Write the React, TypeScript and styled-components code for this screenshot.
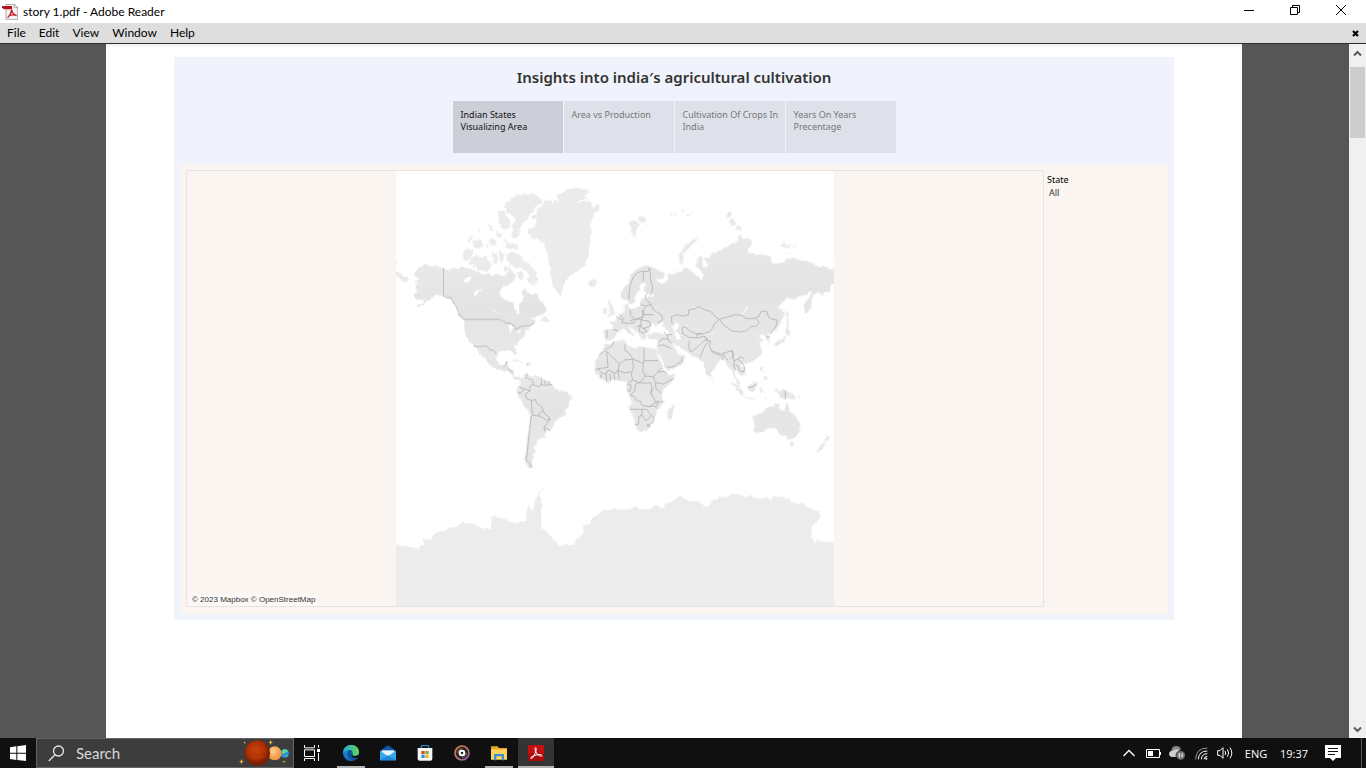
import React from "react";
import styled, { createGlobalStyle, css } from "styled-components";

const UI_FONT = 'Lato, "Open Sans", sans-serif';
const TRAY_FONT = '"Open Sans", "Noto Sans", sans-serif';
const REPORT_FONT = '"Noto Sans", "Open Sans", sans-serif';

const GlobalStyle = createGlobalStyle`
  *, *::before, *::after { box-sizing: border-box; }
  html, body { margin: 0; height: 100%; overflow: hidden; }
  #root { height: 100%; }
  button, input { font: inherit; color: inherit; }
  svg { display: block; }
`;

const Desktop = styled.div`
  display: flex;
  flex-direction: column;
  height: 100vh;
  background: #565656;
  font-family: ${UI_FONT};
  font-size: 12px;
  color: #000;
`;

const PlainButton = styled.button`
  display: flex;
  align-items: center;
  justify-content: center;
  padding: 0;
  border: 0;
  background: none;
`;

/* ---------- Reader window ---------- */

const TitleBar = styled.header`
  display: flex;
  align-items: center;
  height: 23px;
  padding: 0 2px;
  background: #fff;
`;

const WindowTitle = styled.h1`
  flex: 1;
  margin: 0 0 0 5px;
  font-size: 12px;
  font-weight: 400;
  line-height: 23px;
`;

const CaptionButton = styled(PlainButton)`
  align-self: flex-start;
  width: 46px;
  height: 20px;
`;

const MenuBar = styled.nav`
  display: flex;
  align-items: center;
  gap: 13px;
  height: 21px;
  padding: 0 6px 0 7px;
  border-bottom: 1px solid #2c2c2c;
  background: #dedede;
`;

const MenuItem = styled(PlainButton)`
  line-height: 20px;
`;

const CloseDocument = styled(PlainButton)`
  width: 9px;
  height: 20px;
  margin-left: auto;
`;

const Viewer = styled.div`
  display: flex;
  flex: 1;
  min-height: 0;
`;

const Paper = styled.main`
  flex: 1;
  min-width: 0;
  margin: 0 107px 0 106px;
  padding: 13px 68px 0;
  background: linear-gradient(#ededed, #fff 4px);
`;

const ScrollRail = styled.div`
  display: flex;
  flex-direction: column;
  width: 17px;
  padding: 0 1px 0 1px;
  background: #f0f0f0;
`;

const ScrollButton = styled(PlainButton)`
  height: 18px;
`;

const ScrollTrack = styled.div`
  flex: 1;
  padding-top: 5px;
`;

const ScrollThumb = styled.div`
  height: 71px;
  background: #cdcdcd;
`;

/* ---------- Report ---------- */

const Story = styled.article`
  display: flex;
  flex-direction: column;
  align-items: center;
  padding: 8px 6px 6px;
  background: #f0f3fb;
  font-family: ${REPORT_FONT};
`;

const StoryTitle = styled.h2`
  margin: 0;
  color: #333;
  font-size: 15px;
  font-weight: 600;
  line-height: 24px;
`;

const StoryPoints = styled.nav`
  display: grid;
  grid-template-columns: repeat(4, 110px);
  gap: 1px;
  margin: 12px 0 11px;
`;

const StoryPoint = styled.button<{ $current?: boolean }>`
  display: flex;
  align-items: flex-start;
  height: 52px;
  padding: 8px 0 0 8px;
  border: 0;
  background: ${(p) => (p.$current ? "#cccfd7" : "#dee1e9")};
  color: ${(p) => (p.$current ? "#111" : "#777")};
  font-size: 9px;
  line-height: 12px;
  text-align: left;
`;

const Dashboard = styled.section`
  display: flex;
  gap: 3px;
  align-self: stretch;
  padding: 6px 6px 7px;
  background: #faf5f1;
`;

const MapFrame = styled.figure`
  position: relative;
  flex: 1;
  margin: 0;
  border: 1px solid #e6e3e0;
`;

const WorldMapSvg = styled.svg`
  width: 438px;
  height: 435px;
  margin: 0 auto;
  background: #fff;
`;

const Attribution = styled.figcaption`
  position: absolute;
  left: 2px;
  bottom: 0;
  padding: 0 3px;
  background: #fbf9f8;
  color: #333;
  font-family: "Liberation Sans", Arial, sans-serif;
  font-size: 8px;
  line-height: 12px;
`;

const Filter = styled.dl`
  width: 115px;
  margin: 3px 0 0;
  color: #333;
  font-size: 9px;
  line-height: 13px;
`;

const FilterName = styled.dt`
  color: #000;
`;

const FilterValue = styled.dd`
  margin: 0 0 0 2px;
`;

/* ---------- Taskbar ---------- */

const Taskbar = styled.footer`
  display: flex;
  height: 30px;
  background: #101010;
  color: #fff;
`;

const StartButton = styled(PlainButton)`
  width: 36px;
`;

const SearchBox = styled.label`
  display: flex;
  align-items: center;
  gap: 11px;
  width: 258px;
  padding: 0 2px 0 11px;
  border: 1px solid #646464;
  background: #3d3d3d;
`;

const SearchInput = styled.input`
  flex: 1;
  min-width: 0;
  padding: 0;
  border: 0;
  outline: 0;
  background: none;
  font-size: 15px;
  line-height: 28px;
  &::placeholder { color: #d8d8d8; opacity: 1; }
`;

const Pinned = styled.div`
  display: flex;
  gap: 1px;
  margin-left: 3px;
`;

const TaskButton = styled(PlainButton)<{ $state?: "open" | "active" }>`
  width: 36px;
  ${(p) =>
    p.$state === "open" &&
    css`
      background: linear-gradient(#b4b4b4, #b4b4b4) center bottom / 28px 2px no-repeat;
    `}
  ${(p) =>
    p.$state === "active" &&
    css`
      border-bottom: 2px solid #b4b4b4;
      padding-top: 2px;
      background: #343434;
    `}
`;

const Tray = styled.div`
  display: flex;
  align-items: center;
  margin-left: auto;
  font-family: ${TRAY_FONT};
`;

const TrayButton = styled(PlainButton)`
  width: 24px;
  height: 30px;
`;

const TrayText = styled(PlainButton)`
  width: 38px;
  height: 30px;
  font-size: 11px;
`;

const Notifications = styled(TrayButton)`
  margin: 0 16px 0 8px;
`;

const ShowDesktop = styled.button`
  width: 5px;
  height: 30px;
  padding: 0;
  border: 0;
  border-left: 1px solid #555;
  background: none;
`;

/* ---------- Map drawing ---------- */

const poly = (s: string) => `M${s}Z`;

const CANADA_ISLANDS = [
  "343 106 352 96 365 85 378 80 385 73 394 76 405 68 415 73 430 70 440 78 452 86 455 97 443 104 435 112 432 125 420 134 415 143 405 153 395 165 390 180 388 198 378 205 366 204 362 190 370 178 364 168 378 155 372 142 360 132 348 128 350 116",
  "330 122 343 122 347 135 358 146 362 158 358 172 345 180 334 170 328 155 325 140",
  "340 205 352 212 356 222 382 222 384 234 360 237 342 230 350 222",
  "262 176 274 180 268 190", "240 202 252 195 244 210 236 218 231 210", "292 160 304 168 313 184 302 180",
  "246 216 262 208 272 212 281 226 270 235 252 232", "297 205 316 208 320 226 304 226", "318 180 326 192 338 188 332 206 320 200",
  "284 225 296 222 294 232", "222 238 236 237 252 242 242 256 238 266 226 276 219 264",
  "244 264 262 254 276 262 290 256 296 268 305 280 303 296 292 306 276 300 260 303 264 290 248 292 254 284 235 280",
  "305 246 320 248 326 264 318 280 306 276 312 264 302 258", "330 243 344 250 340 276 333 282 328 266",
  "350 254 364 246 376 252 388 250 397 262 396 272 412 276 424 286 430 298 440 306 434 314 446 324 440 332 446 342 432 338 436 350 422 342 412 330 418 318 410 302 396 294 384 292 376 296 368 284 358 286 350 270",
  "380 310 394 306 402 318 396 328 386 324", "342 288 352 290 350 304 342 302",
  "455 448 462 436 470 442 481 454 468 458",
  "0 296 18 303 30 308 42 318 54 326 48 338 36 332 18 318 0 312", "0 276 18 276 27 278 18 281 0 281", "52 350 58 350 57 354",
];

const NORTH_AMERICA =
  "72 310 84 296 98 287 107 280 120 288 140 290 160 294 178 302 192 292 206 298 214 288 222 296 240 294 254 302 266 308 278 314 294 310 304 318 322 310 334 318 348 316 356 300 354 288 364 296 372 308 378 318 374 330 366 338 350 344 336 354 329 366 333 380 346 390 362 396 372 404 374 420 384 434 389 424 386 406 396 396 401 382 394 366 402 356 414 362 422 374 440 370 446 386 458 398 468 412 470 424 458 434 440 438 424 446 436 450 440 460 430 466 418 472 408 484 402 500 390 512 376 524 371 534 380 548 380 556 374 554 366 542 348 540 334 542 322 549 318 564 324 580 336 588 346 586 350 574 358 574 354 594 368 600 370 616 380 624 391 620 392 628 378 628 368 618 358 608 342 602 320 596 300 586 288 568 276 554 264 540 252 526 238 514 226 496 222 474 224 452 212 446 204 428 198 410 186 390 166 380 152 376 136 374 126 384 112 394 84 412 80 408 100 396 106 388 92 390 76 386 70 374 86 362 72 350 88 342 70 334 90 326 74 320";

const GREENLAND =
  "500 76 518 68 532 58 548 55 560 50 572 56 586 56 598 66 588 74 578 76 594 84 576 90 560 94 578 96 588 94 602 94 608 114 622 104 631 112 626 122 612 128 606 146 600 170 606 186 598 206 602 226 594 240 598 254 588 268 584 288 572 298 556 308 542 318 526 332 520 356 512 378 500 368 490 350 482 326 480 306 486 292 476 280 474 258 468 238 462 218 446 208 424 206 412 186 416 176 430 172 440 160 438 148 424 144 440 132 438 120 454 110 462 96 482 90 490 100 494 88 508 100 506 88";

const SOUTH_AMERICA =
  "390 180 396 168 408 160 420 166 436 168 454 172 462 182 478 184 488 192 492 204 508 210 526 214 544 226 546 238 536 252 530 266 526 284 510 292 498 304 490 320 482 332 468 330 464 340 468 348 456 358 442 362 440 374 430 382 436 392 428 404 432 412 424 424 424 434 434 445 416 444 406 430 402 410 408 394 410 368 414 340 418 316 420 290 416 274 402 258 394 242 384 226 380 212 384 200 392 194";

const EURASIA =
  "94 384 92 366 104 352 116 342 120 322 132 302 150 292 164 286 184 288 198 296 214 304 224 314 220 326 206 328 196 320 204 336 218 342 232 330 236 308 244 314 262 306 276 304 286 292 298 298 310 308 318 316 332 328 342 318 330 300 318 290 320 270 330 256 338 262 336 282 344 294 352 280 342 266 360 262 362 250 378 252 390 238 408 232 424 220 442 214 444 200 456 192 458 206 474 204 486 212 482 230 472 246 492 254 514 250 524 258 542 256 544 276 556 284 568 276 584 278 592 264 614 262 630 270 650 272 666 280 690 292 708 290 732 302 750 306 750 336 732 340 720 348 722 362 706 366 696 376 684 366 672 374 664 392 664 412 652 430 643 428 642 408 652 386 666 368 656 364 646 376 626 378 616 388 592 384 576 396 566 412 578 420 586 434 574 452 562 474 548 486 536 496 544 514 538 520 530 508 522 494 512 500 502 500 520 508 510 520 516 536 514 552 500 566 486 574 470 582 456 580 452 588 464 598 467 612 454 618 444 606 434 602 436 620 448 636 454 654 444 646 434 628 426 602 414 592 406 572 394 568 384 580 370 598 364 614 358 622 350 612 342 590 338 576 320 562 300 556 288 542 270 534 252 522 244 520 256 536 266 552 274 552 286 562 278 582 258 594 232 604 224 586 214 566 200 544 200 526 204 510 188 508 174 506 172 494 190 488 206 488 222 494 236 492 236 482 218 470 220 456 206 460 196 470 188 460 178 472 180 484 168 490 170 504 158 510 148 496 140 484 126 476 116 468 122 484 134 494 128 500 112 486 100 474 92 482 84 488 72 504 58 512 44 506 42 480 68 480 68 464 58 458 78 448 88 434 104 424 104 404 112 398 118 416 140 414 152 406 152 390 164 384 190 380 188 370 168 374 160 362 166 344 162 334 152 342 150 358 138 372 134 392 126 404 116 400 114 388 104 392";

const EURASIA_ISLANDS = [
  "54 392 64 390 60 402 68 404 72 422 77 430 68 438 54 440 60 426 56 412",
  "40 416 50 412 52 426 44 434 37 430",
  "0 332 16 328 22 336 18 344 6 350 -2 348 -4 338",
  "114 152 124 156 132 150 144 154 146 168 138 180 134 202 126 190 124 174", "142 144 160 140 170 146 162 158 150 156", "150 178 158 190 152 190",
  "240 130 250 132 244 138", "254 130 262 134 256 138", "274 124 286 118 284 128", "290 130 302 134 292 142", "302 124 312 126 306 130",
  "412 126 422 120 428 134 420 142 408 144", "418 148 430 146 438 160 434 168 422 164", "444 164 456 176 450 182 438 178",
  "264 272 268 256 276 242 290 224 304 212 322 203 322 210 304 226 292 240 280 254 276 268 280 284 268 280",
  "574 220 586 216 586 226 600 222 602 230 584 234 574 230", "604 228 622 232 614 234", "586 246 594 250 590 254",
  "590 416 596 424 592 444 598 470 590 478 588 440", "248 300 254 302 250 306", "722 278 750 277 750 282",
];

const SOUTHERN_ISLANDS = [
  "588 84 602 94 594 106 586 98", "586 106 588 124 570 130 564 138 550 134 562 124 576 122", "512 158 517 150 516 162",
  "478 178 486 180 482 186", "514 196 520 206 518 216 526 222 518 218 512 206", "522 232 532 230 532 240 524 240",
  "424 244 436 252 446 264 460 276 458 288 448 280 436 266", "460 288 478 291 498 295 496 298 474 296",
  "472 260 484 252 494 242 504 252 498 266 490 276 476 272", "508 264 520 260 514 268 520 278 512 274 508 282",
  "548 268 562 266 566 278 578 268 596 274 608 286 618 300 600 296 590 298 572 294 564 280", "622 290 634 286 628 294",
  "488 352 500 344 518 338 526 326 538 318 548 322 554 312 570 310 566 324 580 334 586 322 588 306 596 318 600 334 614 346 628 364 632 380 624 398 614 414 596 418 584 408 572 404 564 390 548 384 530 388 514 396 496 400 492 392 494 376",
  "598 427 612 428 608 440 602 438", "706 400 712 408 722 410 714 422 704 426 708 414", "700 424 706 434 694 448 684 456 680 450 690 440",
  "250 310 256 320 250 338 244 356 236 360 232 348 234 330 244 322", "364 230 371 234 368 240",
];

const AFRICA =
  "46 130 60 132 76 124 94 120 106 118 110 134 126 140 134 146 146 138 166 142 190 144 198 148 200 162 210 180 218 198 232 222 254 222 250 238 236 256 220 270 214 284 220 304 216 318 202 328 198 350 186 372 172 390 148 396 138 382 132 358 124 340 118 326 124 306 118 286 108 266 110 250 94 242 72 240 50 246 34 236 20 222 13 208 16 184 28 162 38 150";

const ANTARCTICA =
  "-12 220 18 220 34 228 56 231 74 233 80 237 98 223 100 208 124 211 130 194 150 184 166 182 184 172 206 168 214 154 224 160 244 160 262 166 272 168 280 180 288 175 304 178 302 166 306 154 302 142 318 137 326 144 346 146 362 154 374 160 390 154 410 152 408 140 412 118 416 106 422 118 432 114 434 92 446 70 454 84 453 172 462 182 480 196 496 214 512 226 526 222 546 228 560 210 580 192 580 166 596 164 604 148 622 136 636 122 660 120 670 114 690 120 716 118 736 112 752 118 774 118 796 104 816 114 828 100 850 92 858 82 872 76 882 86 910 94 928 94 944 112 960 104 974 88 994 80 1018 80 1026 72 1050 74 1066 82 1080 78 1100 86 1132 84 1144 88 1152 80 1170 78 1196 88 1216 100 1236 98 1260 116 1284 124 1292 136 1284 152 1270 166 1264 180 1264 206 1272 222 1280 212 1304 214 1332 219 1362 219 1362 440 -12 440";

const BORDERS_AMERICA =
  "M250 528L268 530 280 528 292 530 300 540 310 540 320 552M338 588L346 586 350 574M352 596L362 602 370 606M376 622L382 626M160 376L172 384 182 382 190 396 200 412 206 430 222 448M330 450L346 458 360 460 372 466 378 478 392 470 410 466 420 468 430 458M410 582L414 586";

const BORDERS_SOUTH_AMERICA =
  "M412 160L408 174 428 180 430 194 420 198 420 212M454 172L456 184 452 196M464 182L466 194M476 184L476 194M430 194L444 200 456 194 466 196 486 194M386 200L400 206 420 212 406 222 408 234 424 242 436 238 440 250 454 258 460 272 448 280 446 288 430 286 426 272 424 242M382 216L392 220 402 206M426 284L422 300 418 340 414 372 412 400 408 420 420 430 424 442M446 288L460 294 470 302 480 296 470 312 462 322 480 332M460 272L466 284 476 290 480 300M462 322L464 334";

const BORDERS_EURASIA =
  "M116 388L118 366 120 346 130 322 142 308 156 304 174 304 184 294M160 304L160 336M174 292L182 308 180 326 188 350 186 366 180 376M168 374L166 386 180 400 188 412 190 420 214 434 218 450 204 458M152 404L166 408 184 404M120 418L122 436 134 448 156 442 162 434 160 418 168 410M162 434L190 434M90 434L100 446 96 458 116 460 132 458 140 446 156 450 178 454 182 468 160 476 150 466 140 470M78 440L96 450M134 448L120 452M46 482L52 484 50 504M68 478L84 482M150 466L148 484 160 490 170 484M160 476L172 484M158 420L158 440 152 456 154 472M246 460L244 440 260 434 280 438 296 434 296 420 316 416 326 410 346 420 362 424 376 440 388 448 400 444 416 440 436 434 454 436 470 446 490 446 506 440 514 424 530 424 536 442 548 448 562 450 558 468 550 480 540 492M388 448L374 460 368 474 360 484 344 490 332 492 316 490 298 482 284 470 276 474 278 490M390 450L404 468 424 482 450 486 470 482 482 470 500 468 508 456 498 446M276 490L298 502 322 504 342 498 354 508 340 514 330 524 318 534 302 546 296 530 298 512M322 504L320 494 336 490M342 498L350 510 362 514 358 526 364 542 394 552 412 546 426 542 432 556 422 566M356 514L346 526 336 548 330 562M364 542L368 548 396 558 398 570M400 550L404 562 414 570M426 542L428 560 434 574 430 584 436 598M430 572L444 568 456 578 464 592 462 606 448 602 444 588 434 584M444 568L450 560 462 566M222 484L228 494 246 494M230 496L236 512 246 520M204 516L220 506 236 508M204 528L216 524 228 528 244 536M232 592L250 590 264 580 276 574 276 562M528 502L538 500";

const BORDERS_AFRICA =
  "M72 124L66 138 50 146 40 156 28 164M50 154L88 192 104 180 128 178M50 154L54 202 24 206 16 212M106 132L104 150 114 156 130 178 160 190 162 182M128 178L130 200 124 222 128 240 150 248M160 190L158 214 166 228 190 230 204 216 212 204M88 192L84 212 104 218 122 216M84 212L88 240M24 206L34 218 48 222 54 210 74 220 84 212M60 222L62 242M72 220L74 240M48 222L50 244M34 222L32 234M128 240L112 252 124 256 120 274 112 272M150 248L136 252 134 272 120 286 134 290 140 302 152 304 156 316 178 320 196 308 218 304M150 248L166 250 182 248 186 262 182 280 192 296 196 308M166 228L150 248M190 230L196 248 220 252 250 236M204 216L222 214 232 222M196 248L198 266 214 280M156 328L156 346 146 350 146 372 136 374M170 328L184 346 190 350 192 362 184 372M156 346L168 362 184 348M178 320L196 318 200 326M172 374L178 372 180 380 174 380ZM182 280L190 268M204 300L200 320";

const STRAIGHT_BORDERS = "M162 142V182H204M118 328H170M586 272V298";
const BORDERS_BORNEO = "M474 262L490 260 496 252M526 296L530 294";

function WorldMap() {
  return (
    <WorldMapSvg viewBox="0 0 1314 1305" role="img" aria-label="World map">
      <defs>
        <filter id="coast" filterUnits="userSpaceOnUse" x="-40" y="0" width="1400" height="1340" colorInterpolationFilters="sRGB">
          <feTurbulence type="fractalNoise" baseFrequency="0.07" numOctaves={2} seed={4} result="n" />
          <feDisplacementMap in="SourceGraphic" in2="n" scale={11} xChannelSelector="R" yChannelSelector="G" />
        </filter>
        <linearGradient id="land" x1="0" y1="0" x2="0" y2="1">
          <stop offset="0" stopColor="#e9e9e9" />
          <stop offset="0.4" stopColor="#e4e4e4" />
          <stop offset="0.7" stopColor="#e8e8e8" />
          <stop offset="1" stopColor="#e5e5e5" />
        </linearGradient>
      </defs>
      <g filter="url(#coast)">
        <g fill="url(#land)">
          <g transform="translate(-18 -3)">
            <path d={poly(NORTH_AMERICA)} />
            <path d="M258 532L268 544 280 564 276 562 264 546ZM358 572L376 568 394 574 402 580 388 578 372 572ZM404 580L416 582 426 586 408 588Z" />
            <path d={poly(GREENLAND)} fill="#ebebeb" />
            <path d={CANADA_ISLANDS.map(poly).join("")} fill="#ebebeb" />
          </g>
          <path transform="translate(-18 447)" d={poly(SOUTH_AMERICA)} />
          <g transform="translate(582 -3)">
            <path d={poly(EURASIA)} />
            <path d={EURASIA_ISLANDS.map(poly).join("")} fill="#e9e9e9" />
          </g>
          <g transform="translate(582 387)">
            <path d={poly(AFRICA)} />
            <path d={SOUTHERN_ISLANDS.map(poly).join("")} fill="#e6e6e6" />
          </g>
        </g>
        <path transform="translate(-18 897)" d={poly(ANTARCTICA)} fill="#ececec" />
        <path d="M428 966l8-10 8-6" fill="none" stroke="#e4e4e4" strokeWidth="3" />
        <g fill="#fff">
          <path transform="translate(-18 -3)" d="M220 330L232 322 244 324 240 334 226 338ZM250 370L262 360 278 358 266 368 256 376ZM312 420L320 424 322 432ZM352 466L364 462 376 472 368 476 362 490 358 478ZM378 488L394 480 390 488Z" />
          <path transform="translate(582 -3)" d="M246 472L256 458 268 462 264 476 258 484 270 492 272 508 260 508 254 490ZM456 430L466 418 472 406 474 412 464 428ZM284 464L292 462 290 468Z" />
        </g>
      </g>
      <g fill="none" stroke="#a6a6a6" strokeWidth="2" strokeLinejoin="round">
        <path transform="translate(-18 -3)" d={"M160 294V376M222 448H330" + BORDERS_AMERICA} />
        <path transform="translate(-18 447)" d={BORDERS_SOUTH_AMERICA} />
        <path transform="translate(582 -3)" d={BORDERS_EURASIA} />
        <path transform="translate(582 387)" d={BORDERS_AFRICA + BORDERS_BORNEO + STRAIGHT_BORDERS} />
      </g>
    </WorldMapSvg>
  );
}

/* ---------- Icons ---------- */

const ReaderFileIcon = () => (
  <svg width="16" height="16" viewBox="0 0 48 48" aria-hidden="true">
    <path d="M12 1h25l10 10v36H12z" fill="#f4f2f2" stroke="#8d8484" strokeWidth="2" />
    <path d="M37 1v10h10z" fill="#fff" stroke="#8d8484" strokeWidth="2" />
    <path d="M0 6h30v10H6l-6-5z" fill="#b5121f" />
    <path d="M29 17c-1 9-4 16-12 24M29 17c2 12 6 16 15 18M20 36c6-4 13-5 24-2" fill="none" stroke="#c1272d" strokeWidth="4" />
  </svg>
);

const MinimizeIcon = () => (
  <svg width="10" height="10" viewBox="0 0 10 10" aria-hidden="true"><path d="M0 5.500h10" stroke="#000" /></svg>
);
const RestoreIcon = () => (
  <svg width="10" height="10" viewBox="0 0 10 10" fill="none" stroke="#000" aria-hidden="true">
    <path d="M.5 2.500h7v7h-7zM2.500 2.500v-2h7v7h-2" />
  </svg>
);
const CloseIcon = () => (
  <svg width="10" height="10" viewBox="0 0 10 10" aria-hidden="true"><path d="M0 0l10 10M10 0L0 10" stroke="#000" /></svg>
);
const SmallCloseIcon = () => (
  <svg width="7" height="7" viewBox="0 0 7 7" aria-hidden="true"><path d="M1 1l5 5M6 1L1 6" stroke="#000" strokeWidth="2.200" /></svg>
);
const Caret = ({ down }: { down?: boolean }) => (
  <svg width="9" height="7" viewBox="0 0 9 7" fill="none" stroke="#5a5a5a" strokeWidth="2" aria-hidden="true">
    <path d={down ? "M1 1.500l3.500 3.500L8 1.500" : "M1 5.500L4.500 2 8 5.500"} />
  </svg>
);

const WindowsIcon = () => (
  <svg width="16" height="16" viewBox="0 0 48 48" fill="#fff" aria-hidden="true">
    <path d="M0 7l19-3v19H0zM22 3.500L48 0v23H22zM0 26h19v19L0 42zM22 26h26v22l-26-3z" />
  </svg>
);
const SearchIcon = () => (
  <svg width="17" height="17" viewBox="0 0 17 17" fill="none" stroke="#e6e6e6" strokeWidth="1.300" aria-hidden="true">
    <circle cx="10.500" cy="6" r="5" /><path d="M7 9.700L.8 16" />
  </svg>
);
const PlanetsIcon = () => (
  <svg width="52" height="26" viewBox="0 0 156 78" aria-hidden="true">
    <defs>
      <radialGradient id="mars" cx="45%" cy="40%"><stop offset="0" stopColor="#c83f08" /><stop offset=".7" stopColor="#ac3005" /><stop offset="1" stopColor="#7c1e03" /></radialGradient>
      <radialGradient id="venus" cx="40%" cy="35%"><stop offset="0" stopColor="#ffd08a" /><stop offset="1" stopColor="#f09a45" /></radialGradient>
    </defs>
    <circle cx="137" cy="40" r="13" fill="#2b8fd8" />
    <path d="M130 32c6-8 14-4 17 2-5 6-8 2-12 8-5-1-7-5-5-10zM139 46l8-2-5 8z" fill="#63d68c" />
    <circle cx="107" cy="40" r="21" fill="url(#venus)" />
    <circle cx="55" cy="39" r="38" fill="url(#mars)" />
    <path d="M34 28c10-5 18 2 30-4M36 50c14 6 24-2 38 2" fill="none" stroke="#d0541a" strokeWidth="3" opacity=".4" />
    <g fill="#f2bd3e">
      <path d="M95 0l2 5 5 2-5 2-2 5-2-5-5-2 5-2zM7 57l2 6 6 2-6 2-2 6-2-6-5-2 5-2zM17 4l1 3 3 1-3 1-1 4-1-4-3-1 3-1zM135 61l1 3 4 1-4 2-1 3-1-3-4-2 4-1z" />
    </g>
  </svg>
);
const TaskViewIcon = () => (
  <svg width="16" height="16" viewBox="0 0 48 48" fill="none" stroke="#fff" strokeWidth="3" aria-hidden="true">
    <path d="M1.500 0v8.500h30V0M1.500 48v-7.500h30V48M1.500 14.500h30v20h-30zM43.500 0v8M43.500 24v24" />
    <path d="M39 12h9v9h-9z" fill="#fff" stroke="none" />
  </svg>
);
const EdgeIcon = () => (
  <svg width="16" height="16" viewBox="0 0 48 48" aria-hidden="true">
    <defs>
      <linearGradient id="edgeTop" x1="0" x2="1"><stop offset="0" stopColor="#2aa8e0" /><stop offset="1" stopColor="#62d84e" /></linearGradient>
      <linearGradient id="edgeBase" x1="0" x2="0" y1="0" y2="1"><stop offset="0" stopColor="#1c9de0" /><stop offset="1" stopColor="#1668bd" /></linearGradient>
    </defs>
    <circle cx="24" cy="24" r="24" fill="url(#edgeBase)" />
    <path d="M0 23C2 8 12 0 25 0c14 0 23 10 23 20 0 9-7 13-14 13-6 0-8-3-6-6 3-5 0-12-9-12C10 15 3 18 0 23z" fill="url(#edgeTop)" />
    <path d="M19 15c-8 5-9 22 6 29 8 3 15 0 20-6-10 4-20 0-21-9-1-4 1-6 4-8-1-4-4-6-9-6z" fill="#12509b" />
    <path d="M29 24c-3 4-1 9 6 9 5 0 9-1 12-5 0 4-1 8-3 10-9 3-18 0-19-8 0-3 2-5 4-6z" fill="#101010" />
  </svg>
);
const MailIcon = () => (
  <svg width="16" height="16" viewBox="0 0 48 48" aria-hidden="true">
    <path d="M0 17L24 1l24 16v29H0z" fill="#0d56a8" />
    <path d="M5 16h38v18H5z" fill="#e9f5fc" />
    <path d="M0 17l24 17 24-17v29H0z" fill="#35a9ec" />
    <path d="M0 46l24-15 24 15z" fill="#2089dc" />
  </svg>
);
const StoreIcon = () => (
  <svg width="16" height="16" viewBox="0 0 48 48" aria-hidden="true">
    <path d="M13 10V2h22v8" fill="none" stroke="#28a5e0" strokeWidth="3" />
    <path d="M2 9h44v32q0 6-6 6H8q-6 0-6-6z" fill="#f7f7f7" />
    <path d="M13 18h10v9H13z" fill="#e8452c" /><path d="M25 18h10v9H25z" fill="#72b52a" />
    <path d="M13 29h10v10H13z" fill="#1c9be4" /><path d="M25 29h10v10H25z" fill="#f8b517" />
  </svg>
);
const MusicIcon = () => (
  <svg width="16" height="16" viewBox="0 0 48 48" fill="none" aria-hidden="true">
    <defs><linearGradient id="disc" x1="0" y1="0" x2="1" y2="1"><stop offset="0" stopColor="#e57b39" /><stop offset=".5" stopColor="#bb756f" /><stop offset="1" stopColor="#8c58c5" /></linearGradient></defs>
    <circle cx="24" cy="24" r="21" stroke="url(#disc)" strokeWidth="5" fill="#2c2624" />
    <path d="M11 24a13 13 0 0 1 13-13M37 24a13 13 0 0 1-13 13" stroke="#84716e" strokeWidth="3" />
    <circle cx="24" cy="24" r="7" stroke="#fff" strokeWidth="6" />
  </svg>
);
const FolderIcon = () => (
  <svg width="16" height="16" viewBox="0 0 48 48" aria-hidden="true">
    <path d="M0 4h20l4 5h24v34H0z" fill="#e9a820" />
    <path d="M0 13h48v31H0z" fill="#ffd45c" />
    <path d="M9 27h30v19h-7V34H16v12H9z" fill="#3c8fdb" />
  </svg>
);
const AcrobatIcon = () => (
  <svg width="16" height="16" viewBox="0 0 48 48" aria-hidden="true">
    <path d="M0 0h48v48H0z" fill="#c30f0f" />
    <path d="M0 24h48v24H0z" fill="#8f0505" opacity=".5" />
    <path d="M23 8c-5 0-1 15 8 22 5 4 12 5 11 1-2-5-26-1-33 6-3 5 3 5 7-1 5-8 12-27 7-28z" fill="none" stroke="#fff" strokeWidth="3" />
  </svg>
);
const ChevronIcon = () => (
  <svg width="12" height="8" viewBox="0 0 12 8" fill="none" stroke="#fff" strokeWidth="1.300" aria-hidden="true"><path d="M.5 7L6 1.500 11.500 7" /></svg>
);
const BatteryIcon = () => (
  <svg width="15" height="9" viewBox="0 0 15 9" aria-hidden="true">
    <path d="M.5.5h13v8H.5z" fill="none" stroke="#fff" /><path d="M2 2h5v5H2zM14 3h1v3h-1z" fill="#fff" />
  </svg>
);
const CloudIcon = () => (
  <svg width="16" height="14" viewBox="0 0 48 42" aria-hidden="true">
    <path d="M7 15Q8 0 22 0q11 0 14 10l-18 10z" fill="#858585" />
    <path d="M10 33q-10-1-10-10 1-9 11-9l8-4q9-2 15 6 12 2 13 16z" fill="#d0d0d0" />
    <circle cx="35" cy="28" r="14" fill="#777" stroke="#101010" strokeWidth="2" />
    <path d="M31 22v12M39 22v12" stroke="#fff" strokeWidth="3" />
  </svg>
);
const WifiIcon = () => (
  <svg width="13" height="13" viewBox="0 0 39 39" fill="none" stroke="#fff" strokeWidth="3" aria-hidden="true">
    <path d="M2 37Q3 3 37 3" stroke="#999" /><path d="M10 37Q11 12 37 12M19 37Q20 20 37 20M27 37q1-9 10-9" />
    <circle cx="34" cy="35" r="3" fill="#fff" stroke="none" />
  </svg>
);
const VolumeIcon = () => (
  <svg width="17" height="14" viewBox="0 0 51 42" fill="none" stroke="#fff" strokeWidth="3" aria-hidden="true">
    <path d="M2 14h7l9-9v32l-9-9H2zM24 15q4 6 0 12M31 10q8 11 0 22M39 5q11 16 0 32" />
  </svg>
);
const NotificationIcon = () => (
  <svg width="16" height="16" viewBox="0 0 16 16" aria-hidden="true">
    <path d="M0 0h16v13h-5l-3 3-3-3H0z" fill="#fff" /><path d="M3 3.500h10M3 6.500h10M3 9.500h7" stroke="#101010" />
  </svg>
);

const MENUS = ["File", "Edit", "View", "Window", "Help"];
const POINTS = ["Indian States Visualizing Area", "Area vs Production", "Cultivation Of Crops In India", "Years On Years Precentage"];

export default function App() {
  return (
    <Desktop>
      <GlobalStyle />
      <TitleBar>
        <ReaderFileIcon />
        <WindowTitle>story 1.pdf - Adobe Reader</WindowTitle>
        <CaptionButton aria-label="Minimize"><MinimizeIcon /></CaptionButton>
        <CaptionButton aria-label="Restore"><RestoreIcon /></CaptionButton>
        <CaptionButton aria-label="Close"><CloseIcon /></CaptionButton>
      </TitleBar>
      <MenuBar aria-label="Menu">
        {MENUS.map((m) => <MenuItem key={m}>{m}</MenuItem>)}
        <CloseDocument aria-label="Close document"><SmallCloseIcon /></CloseDocument>
      </MenuBar>
      <Viewer>
        <Paper>
          <Story>
            <StoryTitle>Insights into india′s agricultural cultivation</StoryTitle>
            <StoryPoints aria-label="Story points">
              {POINTS.map((p, i) => <StoryPoint key={p} $current={i === 0}>{p}</StoryPoint>)}
            </StoryPoints>
            <Dashboard>
              <MapFrame>
                <WorldMap />
                <Attribution>© 2023 Mapbox © OpenStreetMap</Attribution>
              </MapFrame>
              <Filter>
                <FilterName>State</FilterName>
                <FilterValue>All</FilterValue>
              </Filter>
            </Dashboard>
          </Story>
        </Paper>
        <ScrollRail>
          <ScrollButton aria-label="Scroll up"><Caret /></ScrollButton>
          <ScrollTrack><ScrollThumb /></ScrollTrack>
          <ScrollButton aria-label="Scroll down"><Caret down /></ScrollButton>
        </ScrollRail>
      </Viewer>
      <Taskbar>
        <StartButton aria-label="Start"><WindowsIcon /></StartButton>
        <SearchBox>
          <SearchIcon />
          <SearchInput type="text" placeholder="Search" aria-label="Search" />
          <PlanetsIcon />
        </SearchBox>
        <TaskButton aria-label="Task view"><TaskViewIcon /></TaskButton>
        <Pinned>
          <TaskButton $state="open" aria-label="Edge"><EdgeIcon /></TaskButton>
          <TaskButton aria-label="Mail"><MailIcon /></TaskButton>
          <TaskButton aria-label="Store"><StoreIcon /></TaskButton>
          <TaskButton aria-label="Music"><MusicIcon /></TaskButton>
          <TaskButton $state="open" aria-label="File Explorer"><FolderIcon /></TaskButton>
          <TaskButton $state="active" aria-label="Adobe Reader"><AcrobatIcon /></TaskButton>
        </Pinned>
        <Tray>
          <TrayButton aria-label="Hidden icons"><ChevronIcon /></TrayButton>
          <TrayButton aria-label="Battery"><BatteryIcon /></TrayButton>
          <TrayButton aria-label="Cloud sync"><CloudIcon /></TrayButton>
          <TrayButton aria-label="Network"><WifiIcon /></TrayButton>
          <TrayButton aria-label="Volume"><VolumeIcon /></TrayButton>
          <TrayText>ENG</TrayText>
          <TrayText>19:37</TrayText>
          <Notifications aria-label="Notifications"><NotificationIcon /></Notifications>
          <ShowDesktop aria-label="Show desktop" />
        </Tray>
      </Taskbar>
    </Desktop>
  );
}
